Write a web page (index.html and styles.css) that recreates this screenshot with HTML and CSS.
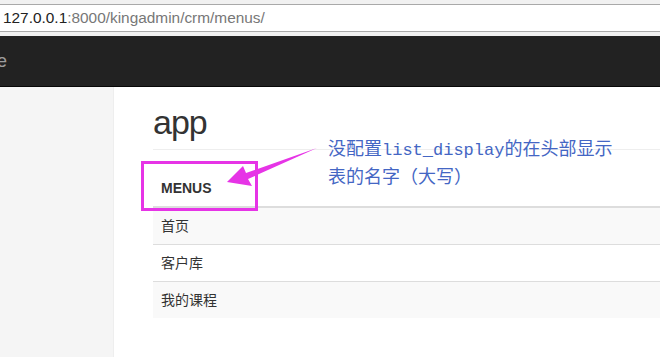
FILE: index.html
```html
<!DOCTYPE html>
<html lang="zh-CN">
<head>
    <meta charset="UTF-8">
    <title>kingadmin - menus</title>
    <link rel="stylesheet" href="styles.css">
</head>
<body>
    <div class="urlbar">
        <div class="url"><span class="host">127.0.0.1</span>:8000/kingadmin/crm/menus/</div>
    </div>

    <nav class="navbar">
        <span class="brand">e</span>
    </nav>

    <div class="layout">
        <div class="sidebar"></div>
        <div class="main">
            <h1 class="page-header">app</h1>
            <table class="table">
                <thead>
                    <tr><th>MENUS</th></tr>
                </thead>
                <tbody>
                    <tr><td>首页</td></tr>
                    <tr><td>客户库</td></tr>
                    <tr><td>我的课程</td></tr>
                </tbody>
            </table>
        </div>
    </div>

    <!-- 截图上的标注 -->
    <div class="mark-box"></div>
    <svg class="mark-arrow" width="660" height="357" viewBox="0 0 660 357">
        <polygon points="227,182 243,166 246,173 317,148 248,179 252,186" fill="#e634e6"/>
    </svg>
    <div class="mark-note">没配置<span class="mono">list_display</span>的在头部显示<br>表的名字（大写）</div>
</body>
</html>
```

FILE: styles.css
```css
body {
    margin: 0;
    padding: 0;
    position: relative;
    height: 357px;
    overflow: hidden;
    font-family: "Liberation Sans", "Noto Sans CJK SC", sans-serif;
    font-size: 14px;
    color: #333;
    background-color: #fff;
}
.urlbar {
    background-color: #f1f1f1;
    padding: 4px 0 4px 0;
}
.url {
    height: 26px;
    line-height: 26px;
    padding-left: 3px;
    background-color: #fff;
    border-top: 1px solid #a9a9a9;
    border-bottom: 1px solid #a9a9a9;
    font-size: 15.4px;
    color: #777;
}
.url .host {
    color: #222;
}
.navbar {
    height: 50px;
    background-color: #222;
    border-bottom: 1px solid #080808;
}
.brand {
    display: inline-block;
    margin-left: -3px;
    line-height: 50px;
    font-size: 18px;
    color: #9d9d9d;
}
.layout {
    display: flex;
    height: 270px;
}
.sidebar {
    width: 113px;
    background-color: #f5f5f5;
    border-right: 1px solid #eee;
}
.main {
    flex: 1;
    padding-left: 39px;
}
.page-header {
    margin: 17px 0 20px 0;
    padding-bottom: 9px;
    border-bottom: 1px solid #eee;
    font-size: 34px;
    line-height: 36px;
    font-weight: normal;
    letter-spacing: -1px;
    color: #333;
}
.table {
    width: 100%;
    border-collapse: collapse;
    border-spacing: 0;
}
.table th {
    padding: 8px;
    line-height: 20px;
    text-align: left;
    font-weight: bold;
    border-bottom: 2px solid #ddd;
}
.table td {
    padding: 8px;
    line-height: 20px;
    border-top: 1px solid #ddd;
}
.table tbody tr:nth-child(odd) {
    background-color: #f9f9f9;
}
.mark-box {
    position: absolute;
    left: 141px;
    top: 161px;
    width: 117px;
    height: 50px;
    box-sizing: border-box;
    border: 3px solid #e634e6;
}
.mark-arrow {
    position: absolute;
    left: 0;
    top: 0;
}
.mark-note {
    position: absolute;
    left: 328px;
    top: 135px;
    font-family: "Noto Sans CJK SC", sans-serif;
    font-size: 18px;
    line-height: 24px;
    color: #4466c4;
    white-space: nowrap;
}
.mark-note .mono {
    font-family: "Liberation Mono", monospace;
    font-size: 17px;
}
```
